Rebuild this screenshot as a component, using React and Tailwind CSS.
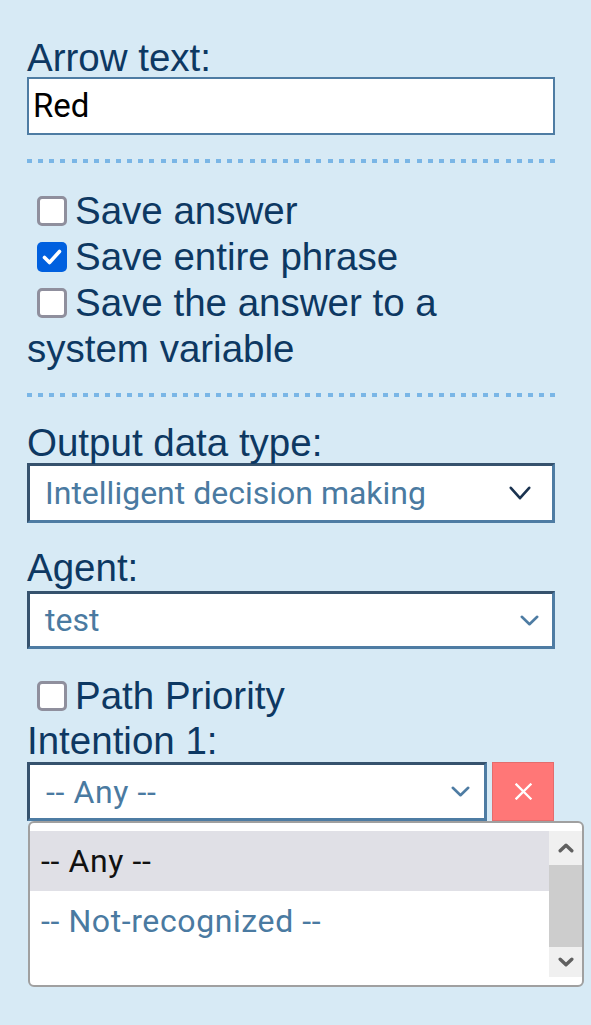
import React from "react";

function Box({ checked }) {
  if (checked) {
    return (
      <span className="inline-flex h-[30px] w-[30px] shrink-0 items-center justify-center rounded-[5px] bg-[#0060df]">
        <svg viewBox="0 0 30 30" className="h-[30px] w-[30px]">
          <path d="M7.5 15.5 L12.5 20.5 L22.5 9.5" fill="none" stroke="#fff" strokeWidth="3.6" strokeLinecap="round" strokeLinejoin="round" />
        </svg>
      </span>
    );
  }
  return <span className="inline-block h-[30px] w-[30px] shrink-0 rounded-[5px] border-[3px] border-[#8f8f9d] bg-white" />;
}

function Chevron({ w, h, color, sw, className }) {
  return (
    <svg width={w} height={h} viewBox={`0 0 ${w} ${h}`} className={className}>
      <path d={`M${sw / 2 + 0.5} ${sw / 2 + 0.5} L${w / 2} ${h - sw / 2 - 0.5} L${w - sw / 2 - 0.5} ${sw / 2 + 0.5}`} fill="none" stroke={color} strokeWidth={sw} strokeLinecap="round" strokeLinejoin="round" />
    </svg>
  );
}

function Dots({ className }) {
  return <div className={`h-[4px] bg-[repeating-linear-gradient(90deg,#7ab6e6_0px,#7ab6e6_5px,transparent_5px,transparent_11.13px)] ${className}`} />;
}

const label = "text-[38.5px] leading-[41px] text-[#0d3862]";
const value = "font-[Roboto,sans-serif] text-[32px]";
const dash = "font-[Roboto,sans-serif] text-[32px] tracking-[0.6px]";

export default function App() {
  return (
    <div className="min-h-screen bg-[#d7eaf5] pl-[27px] pt-[37px] font-['Liberation_Sans',Arial,sans-serif]">
      <div className="w-[528px]">
        <div className={label}>Arrow text:</div>
        <div className={`-mt-[1px] flex h-[58px] items-center border-2 border-[#4e7ca3] bg-white pl-[4px] text-black ${value} text-[33px]`}>Red</div>

        <Dots className="mt-[24px]" />

        <div className="mt-[25px] text-[38.5px] leading-[46px] text-[#0d3862]">
          <div className="flex h-[46px] items-center gap-[8px] pl-[10px]">
            <Box />
            <span>Save answer</span>
          </div>
          <div className="flex h-[46px] items-center gap-[8px] pl-[10px]">
            <Box checked />
            <span>Save entire phrase</span>
          </div>
          <div className="flex h-[46px] items-center gap-[8px] pl-[10px]">
            <Box />
            <span>Save the answer to a</span>
          </div>
          <div className="h-[46px]">system variable</div>
        </div>

        <Dots className="mt-[21px]" />

        <div className={`mt-[25px] ${label}`}>Output data type:</div>
        <div className="flex h-[60px] items-center justify-between border-[3px] border-t-[#36526d] border-l-[#36526d] border-r-[#4e7ca3] border-b-[#4e7ca3] bg-white pl-[15px] pr-[21px]">
          <span className={`${value} text-[#4a7aa1]`}>Intelligent decision making</span>
          <Chevron w={22} h={14} color="#1b3350" sw={2.6} />
        </div>

        <div className={`mt-[24px] ${label}`}>Agent:</div>
        <div className="mt-[3px] flex h-[58px] items-center justify-between border-[3px] border-t-[#36526d] border-l-[#36526d] border-r-[#4e7ca3] border-b-[#4e7ca3] bg-white pl-[15px] pr-[13px]">
          <span className={`${value} text-[#4a7aa1]`}>test</span>
          <Chevron w={19} h={11} color="#4e7ca3" sw={2.6} />
        </div>

        <div className="mt-[24px] flex h-[46px] items-center gap-[8px] pl-[10px] text-[38.5px] leading-[46px] text-[#0d3862]">
          <Box />
          <span>Path Priority</span>
        </div>
        <div className={`mt-[1px] ${label}`}>Intention 1:</div>

        <div className="relative mt-[1px] flex h-[59px] gap-[5px]">
          <div className="flex w-[460px] items-center justify-between border-[3px] border-t-[#36526d] border-l-[#36526d] border-r-[#4e7ca3] border-b-[#4e7ca3] bg-white pl-[16px] pr-[14px]">
            <span className={`${dash} text-[#4a7aa1]`}>-- Any --</span>
            <Chevron w={19} h={11} color="#4e7ca3" sw={2.6} />
          </div>
          <button className="flex w-[62px] items-center justify-center border border-[#e46c6c] bg-[#ff7777]">
            <svg width="17" height="17" viewBox="0 0 17 17">
              <path d="M1.5 1.5 L15.5 15.5 M15.5 1.5 L1.5 15.5" stroke="#fff" strokeWidth="2.3" strokeLinecap="square" />
            </svg>
          </button>

          <div className="absolute left-[1px] top-full z-10 h-[166px] w-[556px] overflow-hidden rounded-[6px] border-2 border-[#a0a0a0] bg-white py-[8px]">
            <div className="flex h-[146px]">
              <div className="flex-1">
                <div className={`flex h-[60px] items-center bg-[#e0e0e6] pl-[11px] text-[#111] ${dash}`}>-- Any --</div>
                <div className={`flex h-[60px] items-center pl-[11px] text-[#4a7aa1] ${dash}`}>-- Not-recognized --</div>
              </div>
              <div className="flex w-[33px] flex-col bg-[#f0f0f0]">
                <div className="flex h-[34px] items-center justify-center">
                  <Chevron w={16} h={10} color="#606060" sw={3.4} className="rotate-180" />
                </div>
                <div className="h-[82px] bg-[#cdcdcd]" />
                <div className="flex flex-1 items-center justify-center">
                  <Chevron w={16} h={10} color="#606060" sw={3.4} />
                </div>
              </div>
            </div>
          </div>
        </div>
      </div>
    </div>
  );
}
